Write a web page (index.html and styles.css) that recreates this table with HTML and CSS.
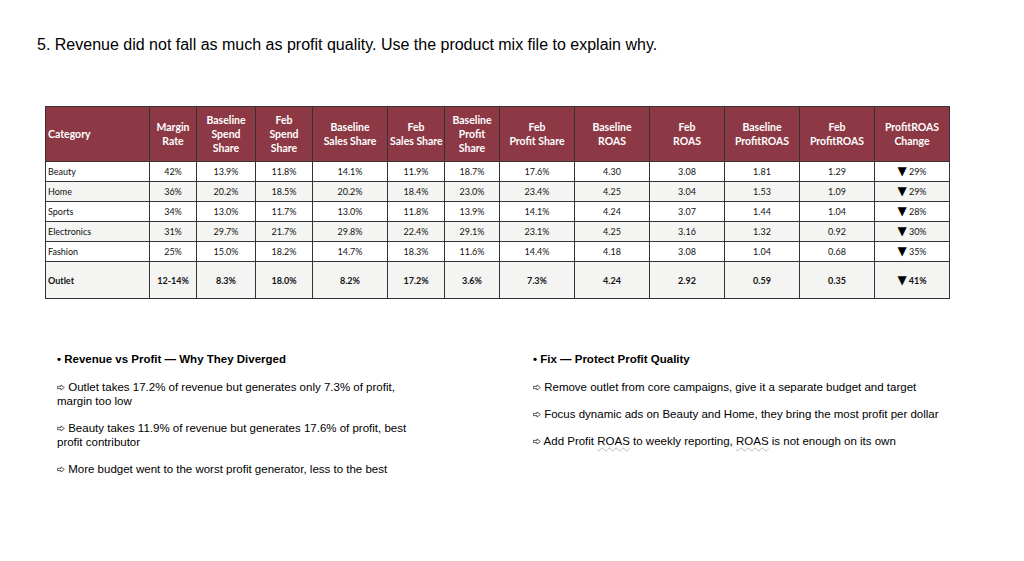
FILE: index.html
```html
<!DOCTYPE html>
<html lang="en">
<head>
<meta charset="utf-8">
<title>Product mix</title>
<link rel="stylesheet" href="styles.css">
</head>
<body>
<div class="page">
  <h1 class="title">5. Revenue did not fall as much as profit quality. Use the product mix file to explain why.</h1>
  <div class="table-wrap">
    <table class="mix">
      <colgroup>
        <col class="w-cat"><col class="w-47"><col class="w-59"><col class="w-57"><col class="w-75"><col class="w-57"><col class="w-55"><col class="w-75"><col class="w-75"><col class="w-75"><col class="w-75"><col class="w-75"><col class="w-75">
      </colgroup>
      <thead>
        <tr>
          <th class="left">Category</th>
          <th>Margin<br>Rate</th>
          <th>Baseline<br>Spend<br>Share</th>
          <th>Feb<br>Spend<br>Share</th>
          <th>Baseline<br>Sales Share</th>
          <th>Feb<br>Sales Share</th>
          <th>Baseline<br>Profit<br>Share</th>
          <th>Feb<br>Profit Share</th>
          <th>Baseline<br>ROAS</th>
          <th>Feb<br>ROAS</th>
          <th>Baseline<br>ProfitROAS</th>
          <th>Feb<br>ProfitROAS</th>
          <th>ProfitROAS<br>Change</th>
        </tr>
      </thead>
      <tbody>
        <tr><td class="left">Beauty</td><td>42%</td><td>13.9%</td><td>11.8%</td><td>14.1%</td><td>11.9%</td><td>18.7%</td><td>17.6%</td><td>4.30</td><td>3.08</td><td>1.81</td><td>1.29</td><td><span class="tri">▼</span> 29%</td></tr>
        <tr class="alt"><td class="left">Home</td><td>36%</td><td>20.2%</td><td>18.5%</td><td>20.2%</td><td>18.4%</td><td>23.0%</td><td>23.4%</td><td>4.25</td><td>3.04</td><td>1.53</td><td>1.09</td><td><span class="tri">▼</span> 29%</td></tr>
        <tr><td class="left">Sports</td><td>34%</td><td>13.0%</td><td>11.7%</td><td>13.0%</td><td>11.8%</td><td>13.9%</td><td>14.1%</td><td>4.24</td><td>3.07</td><td>1.44</td><td>1.04</td><td><span class="tri">▼</span> 28%</td></tr>
        <tr class="alt"><td class="left">Electronics</td><td>31%</td><td>29.7%</td><td>21.7%</td><td>29.8%</td><td>22.4%</td><td>29.1%</td><td>23.1%</td><td>4.25</td><td>3.16</td><td>1.32</td><td>0.92</td><td><span class="tri">▼</span> 30%</td></tr>
        <tr><td class="left">Fashion</td><td>25%</td><td>15.0%</td><td>18.2%</td><td>14.7%</td><td>18.3%</td><td>11.6%</td><td>14.4%</td><td>4.18</td><td>3.08</td><td>1.04</td><td>0.68</td><td><span class="tri">▼</span> 35%</td></tr>
        <tr class="alt outlet"><td class="left">Outlet</td><td>12-14%</td><td>8.3%</td><td>18.0%</td><td>8.2%</td><td>17.2%</td><td>3.6%</td><td>7.3%</td><td>4.24</td><td>2.92</td><td>0.59</td><td>0.35</td><td><span class="tri">▼</span> 41%</td></tr>
      </tbody>
    </table>
  </div>
  <div class="notes">
    <section class="col col-left">
      <h2 class="head">• Revenue vs Profit — Why They Diverged</h2>
      <p class="item"><svg class="arr" viewBox="0 0 10 8" aria-hidden="true"><path d="M0.6 2.6H5V0.8L9.2 4L5 7.2V5.4H0.6Z" fill="none" stroke="#222" stroke-width="0.9" stroke-linejoin="round"/></svg> Outlet takes 17.2% of revenue but generates only 7.3% of profit, margin too low</p>
      <p class="item"><svg class="arr" viewBox="0 0 10 8" aria-hidden="true"><path d="M0.6 2.6H5V0.8L9.2 4L5 7.2V5.4H0.6Z" fill="none" stroke="#222" stroke-width="0.9" stroke-linejoin="round"/></svg> Beauty takes 11.9% of revenue but generates 17.6% of profit, best profit contributor</p>
      <p class="item"><svg class="arr" viewBox="0 0 10 8" aria-hidden="true"><path d="M0.6 2.6H5V0.8L9.2 4L5 7.2V5.4H0.6Z" fill="none" stroke="#222" stroke-width="0.9" stroke-linejoin="round"/></svg> More budget went to the worst profit generator, less to the best</p>
    </section>
    <section class="col col-right">
      <h2 class="head">• Fix — Protect Profit Quality</h2>
      <p class="item"><svg class="arr" viewBox="0 0 10 8" aria-hidden="true"><path d="M0.6 2.6H5V0.8L9.2 4L5 7.2V5.4H0.6Z" fill="none" stroke="#222" stroke-width="0.9" stroke-linejoin="round"/></svg> Remove outlet from core campaigns, give it a separate budget and target</p>
      <p class="item"><svg class="arr" viewBox="0 0 10 8" aria-hidden="true"><path d="M0.6 2.6H5V0.8L9.2 4L5 7.2V5.4H0.6Z" fill="none" stroke="#222" stroke-width="0.9" stroke-linejoin="round"/></svg> Focus dynamic ads on Beauty and Home, they bring the most profit per dollar</p>
      <p class="item"><svg class="arr" viewBox="0 0 10 8" aria-hidden="true"><path d="M0.6 2.6H5V0.8L9.2 4L5 7.2V5.4H0.6Z" fill="none" stroke="#222" stroke-width="0.9" stroke-linejoin="round"/></svg> Add Profit <span class="spell">ROAS</span> to weekly reporting, <span class="spell">ROAS</span> is not enough on its own</p>
    </section>
  </div>
</div>
</body>
</html>
```
FILE: styles.css
```css
* { box-sizing: border-box; }
html, body { margin: 0; padding: 0; background: #ffffff; }
.page {
  width: 1024px;
  height: 561px;
  overflow: hidden;
  font-family: "Liberation Sans", Arial, sans-serif;
  color: #000;
}
.title {
  margin: 0;
  padding: 36px 0 0 37px;
  font-size: 16px;
  line-height: 18px;
  font-weight: normal;
}
.table-wrap {
  padding: 52px 0 0 45px;
}
.mix {
  width: 905px;
  table-layout: fixed;
  border-collapse: collapse;
  font-family: Lato, "Open Sans", sans-serif;
  color: #111;
}
.w-cat { width: 104px; }
.w-47 { width: 47px; }
.w-59 { width: 59px; }
.w-57 { width: 57px; }
.w-55 { width: 55px; }
.w-75 { width: 75px; }
.mix th, .mix td {
  border: 1px solid #333;
  padding: 0 2px;
  text-align: center;
  vertical-align: middle;
  white-space: nowrap;
  overflow: hidden;
}
.mix th {
  background: #8d3945;
  color: #fff;
  font-size: 10.5px;
  font-weight: bold;
  line-height: 14px;
  height: 55px;
}
.mix td {
  font-size: 9px;
  height: 20px;
  line-height: 11px;
  background: #fff;
}
.mix .left { text-align: left; padding-left: 2px; }
.mix tr.alt td { background: #f4f4f2; }
.mix tr.outlet td { height: 37px; font-weight: bold; }
.tri { font-family: "DejaVu Sans", sans-serif; font-size: 12px; line-height: 11px; color: #000; }
.notes {
  display: grid;
  grid-template-columns: 476px 1fr;
  padding: 53px 0 0 57px;
}
.col { margin: 0; }
.head {
  margin: 0 0 14px 0;
  font-size: 11.5px;
  line-height: 14px;
  font-weight: bold;
}
.item {
  margin: 0 0 13px 0;
  font-size: 11.5px;
  line-height: 14px;
  max-width: 360px;
}
.col-right .item { max-width: 420px; }
.arr {
  width: 8px;
  height: 7px;
  vertical-align: 0;
}
.spell {
  text-decoration: underline wavy #b8b8b8;
  text-decoration-thickness: 1px;
  text-underline-offset: 2px;
}
```
